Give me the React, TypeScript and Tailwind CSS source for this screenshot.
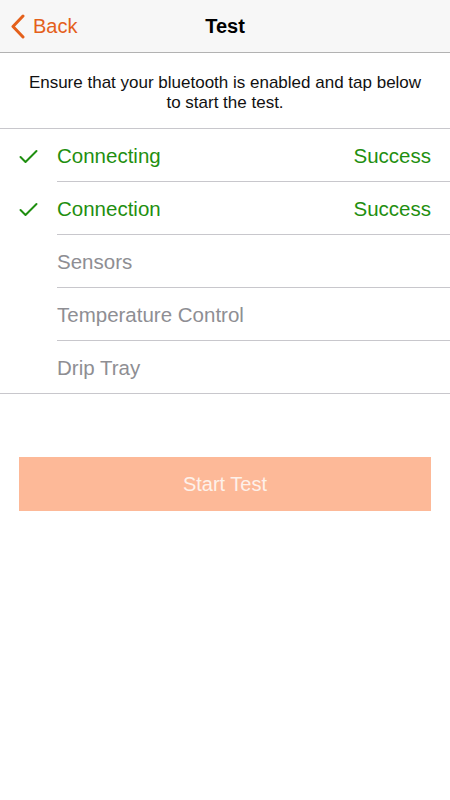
import React from "react";

const rows = [
  { label: "Connecting", done: true },
  { label: "Connection", done: true },
  { label: "Sensors", done: false },
  { label: "Temperature Control", done: false },
  { label: "Drip Tray", done: false },
];

export default function App() {
  return (
    <div
      className="w-[450px] h-[800px] bg-white"
      style={{ fontFamily: '"Liberation Sans", Arial, sans-serif' }}
    >
      <div className="relative h-[53px] bg-[#f7f7f7] border-b border-[#b2b2b2] flex items-center justify-center">
        <div className="absolute left-[10px] top-0 h-[52px] flex items-center text-[#e4601b]">
          <svg width="15" height="25" viewBox="0 0 15 25" className="mr-[8px]">
            <path d="M13 2 L3 12.5 L13 23" fill="none" stroke="#e4601b" strokeWidth="3" strokeLinecap="round" strokeLinejoin="round" />
          </svg>
          <span className="text-[20px] leading-none">Back</span>
        </div>
        <span className="text-[20px] font-bold text-black">Test</span>
      </div>
      <div className="pt-[20px] pb-[15px] px-[20px] text-center text-[17px] leading-[20px] text-[#111]">
        Ensure that your bluetooth is enabled and tap below
        <br />
        to start the test.
      </div>
      <div className="border-t border-[#c8c7cc]">
        {rows.map((r, i) => (
          <div key={r.label} className="flex h-[53px]">
            <div className="w-[57px] flex items-center pl-[19px] pt-[1px]">
              {r.done && (
                <svg width="19" height="15" viewBox="0 0 19 15">
                  <path d="M1.5 8 L6.5 13 L17.5 2" fill="none" stroke="#1f8f10" strokeWidth="2" strokeLinecap="round" strokeLinejoin="round" />
                </svg>
              )}
            </div>
            <div
              className={
                "flex-1 flex items-center justify-between pr-[19px] pt-[2px] text-[20.5px] " +
                (i < rows.length - 1 ? "border-b border-[#c8c7cc]" : "")
              }
            >
              <span className={r.done ? "text-[#1f8f10]" : "text-[#8e8e93]"}>{r.label}</span>
              {r.done && <span className="text-[#1f8f10]">Success</span>}
            </div>
          </div>
        ))}
      </div>
      <div className="border-t border-[#c8c7cc] -mt-px" />
      <div className="px-[19px] pt-[63px]">
        <div className="h-[54px] bg-[#fdb998] flex items-center justify-center text-[20px] text-[#fdf1ea]">
          Start Test
        </div>
      </div>
    </div>
  );
}
